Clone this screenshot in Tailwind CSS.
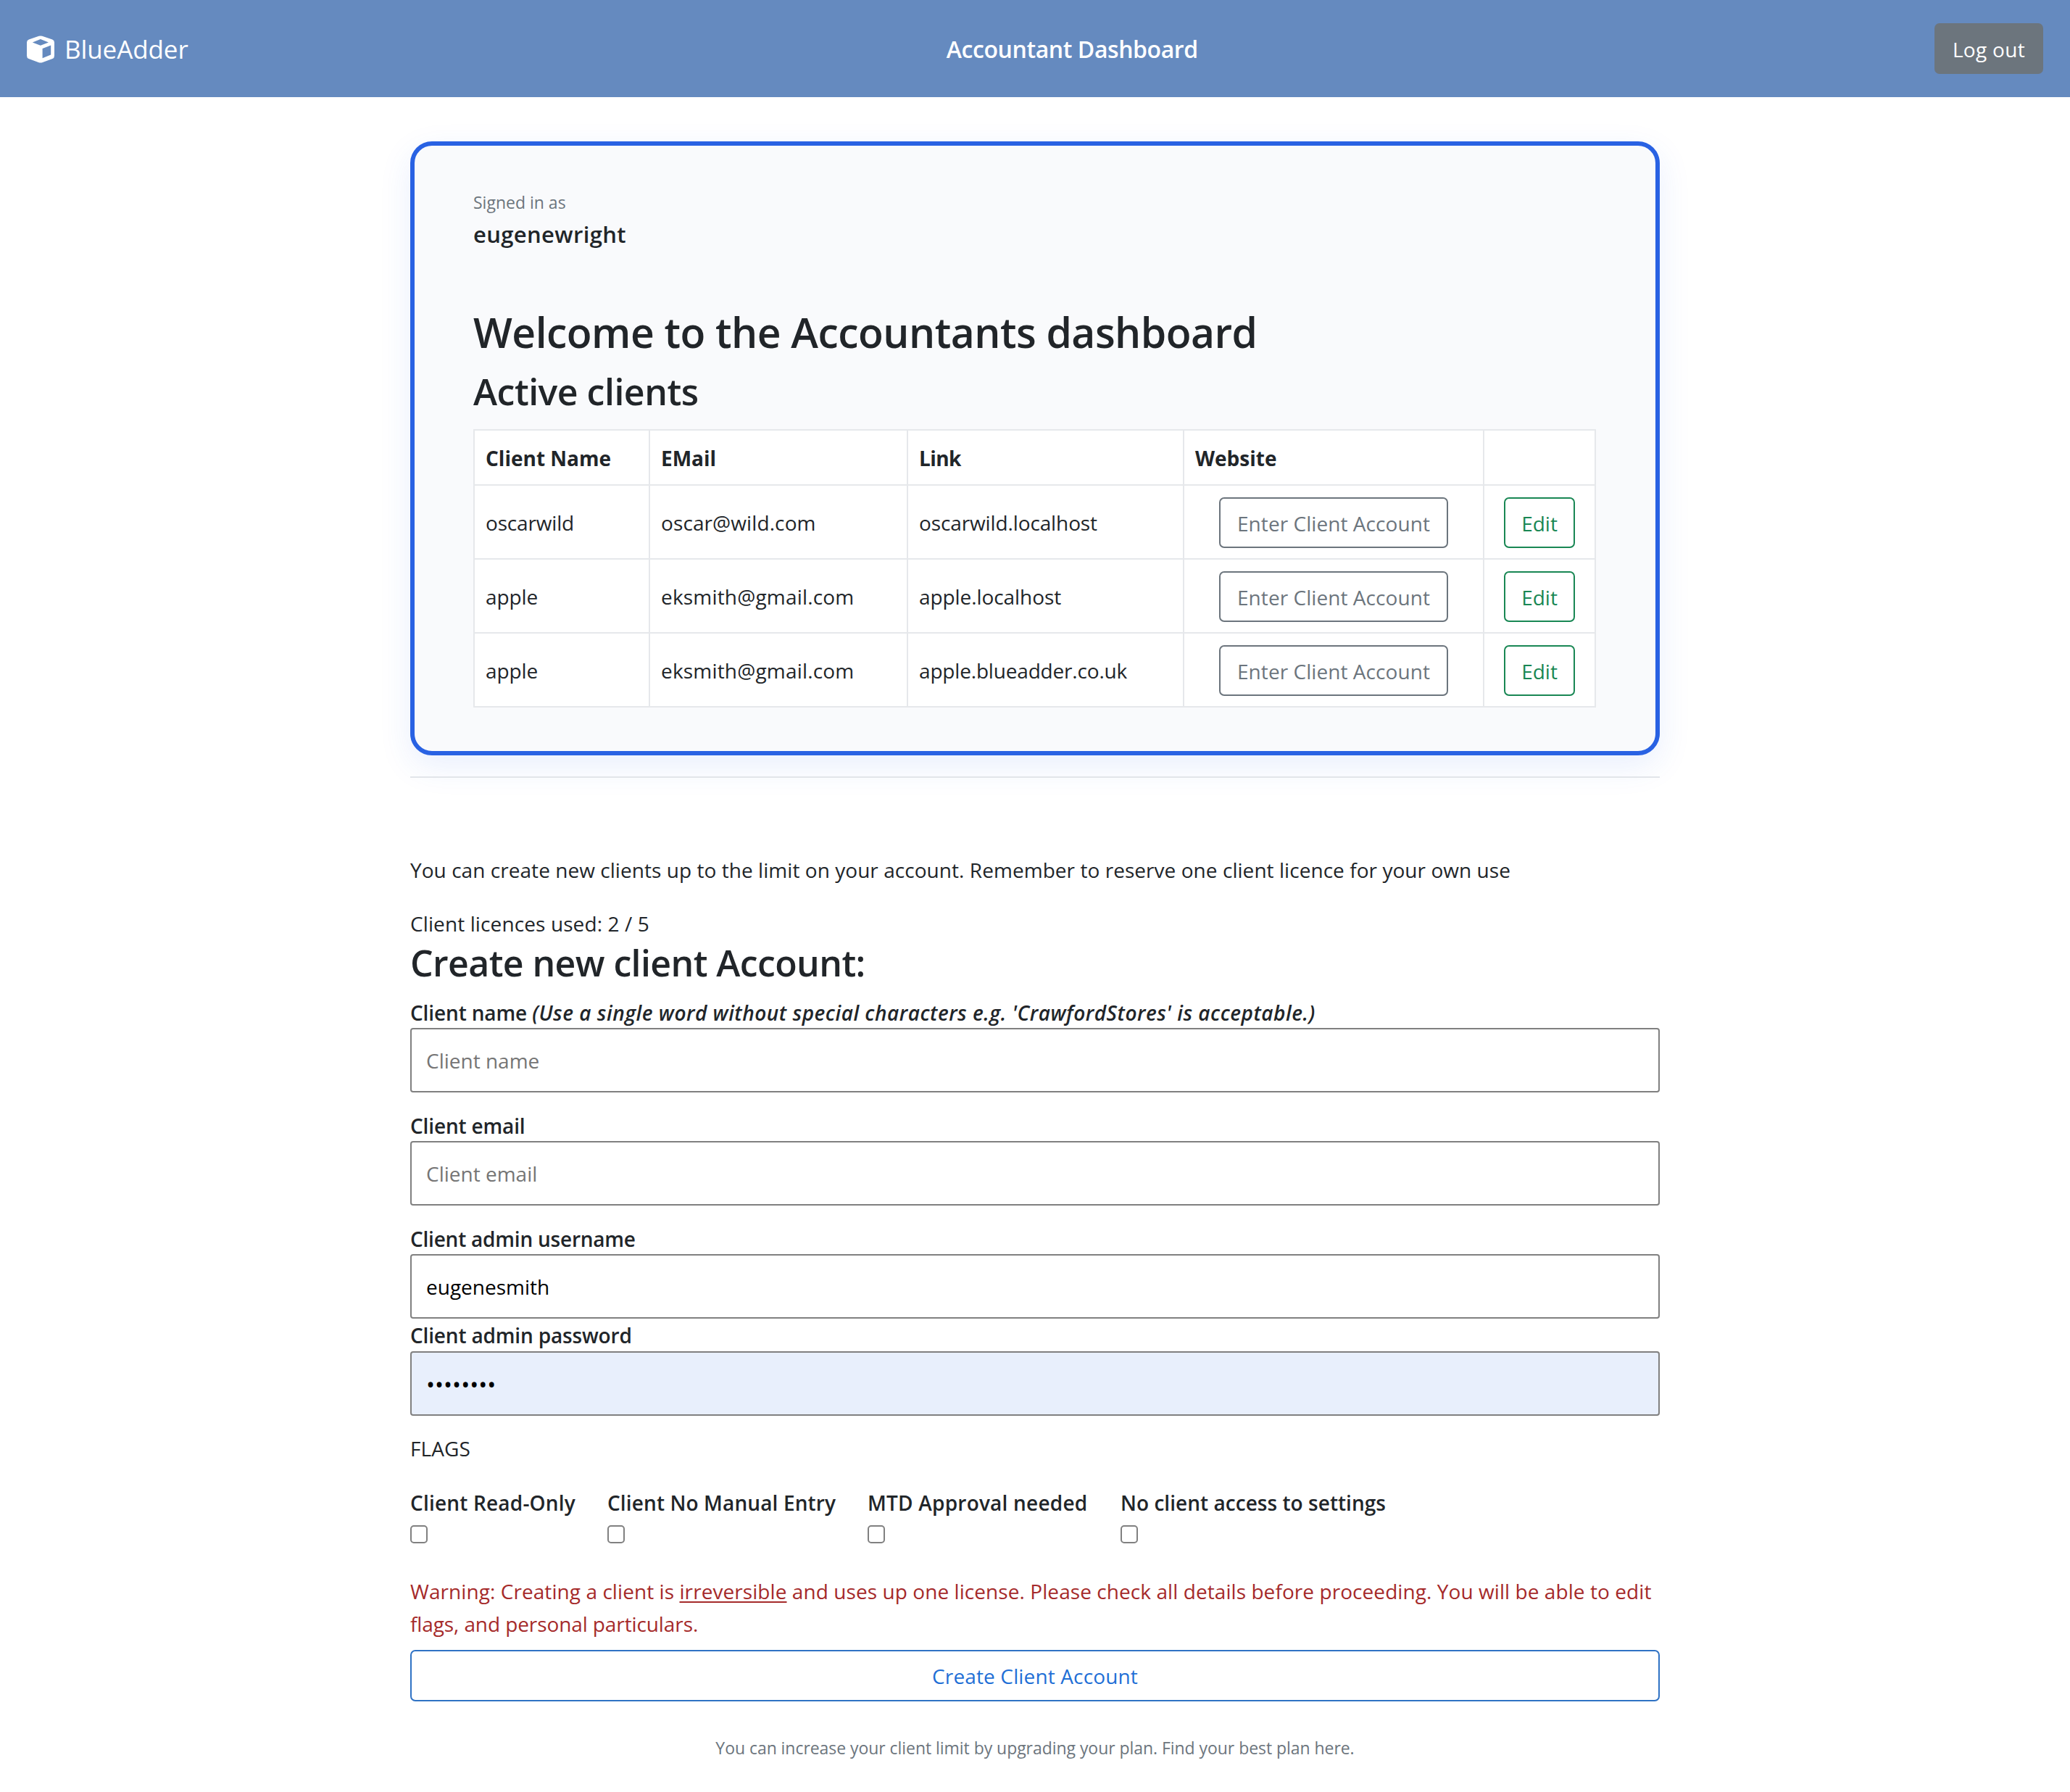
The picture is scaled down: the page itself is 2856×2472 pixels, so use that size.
<!DOCTYPE html>
<html lang="en">
<head>
  <meta charset="UTF-8">
  <meta name="viewport" content="width=device-width, initial-scale=1.0">
  <title>Accountant Dashboard</title>
  <script src="https://cdn.jsdelivr.net/npm/@tailwindcss/browser@4"></script>
  <style>
    body {
      font-family: 'Open Sans', sans-serif;
    }
  </style>
</head>
<body class="bg-white text-[#212529] text-[28px] leading-[44px]">

  <header class="bg-[#658abf] text-white h-[134px] flex justify-between items-center px-[37px]">
    <a href="#" class="mr-[30px] flex items-center gap-[14px] text-[35px] tracking-[-0.1px] pt-px">
      <svg class="w-[38px] h-[38px]" viewBox="0 0 38 38" fill="currentColor">
        <path fill-rule="evenodd" d="M16.6 .8Q18.9 0 21.2 .8L35.2 5.6Q38 6.7 38 9.6V28Q38 31 35.4 32L21.2 37.2Q18.9 38 16.6 37.2L2.6 32Q0 31 0 28V9.6Q0 6.7 2.8 5.6ZM18.9 4.9L7.8 9.4L18.9 13.7L30 9.4ZM33.2 13.4L21.6 17.9V31.2L33.2 26.6Z"/>
      </svg>
      <span>BlueAdder</span>
    </a>
    <h1 class="pt-px text-[32px] font-semibold tracking-[-0.42px]">Accountant Dashboard</h1>
    <button class="w-[150px] h-[70px] pt-0.5 rounded-[7px] bg-[#6c757d] tracking-[0.3px]">Log out</button>
  </header>

  <main class="w-[1724px] mx-auto pt-[61px]">

    <section class="border-[6px] border-[#2962e3] rounded-[30px] bg-[#f9fafc] px-[81px] pt-[60px] pb-[60px] shadow-[0_15px_45px_rgba(37,99,235,0.1)]">
      <p class="text-[23px] leading-[37px] h-[36px] text-[#6c757d]">Signed in as</p>
      <p class="mt-[3px] text-[31px] leading-[46px] font-semibold tracking-[0.36px]">eugenewright</p>

      <h2 class="mt-[77px] text-[57px] leading-[70px] font-semibold tracking-[-0.53px]">Welcome to the Accountants dashboard</h2>
      <h3 class="mt-[16px] text-[50px] leading-[62px] font-semibold tracking-[-0.5px]">Active clients</h3>

      <table class="mt-[21px] w-[1549px] table-fixed border-collapse bg-white text-left [&_th]:border-2 [&_td]:border-2 [&_th]:border-[#e6e8eb] [&_td]:border-[#e6e8eb] [&_th]:px-[15px] [&_td]:px-[15px] [&_td]:pt-px [&_td]:pb-0 [&_td]:leading-none">
        <colgroup>
          <col class="w-[242px]">
          <col class="w-[356px]">
          <col class="w-[381px]">
          <col class="w-[414px]">
          <col class="w-[154px]">
        </colgroup>
        <thead>
          <tr class="h-[76px]">
            <th class="pt-0.5">Client Name</th>
            <th class="pt-0.5">EMail</th>
            <th class="pt-0.5 tracking-[-0.6px]">Link</th>
            <th class="pt-0.5">Website</th>
            <th></th>
          </tr>
        </thead>
        <tbody>
          <tr class="h-[102px]">
            <td><span class="tracking-[-0.17px]">oscarwild</span></td>
            <td><span class="tracking-[0.1px]">oscar@wild.com</span></td>
            <td><span class="tracking-[-0.12px]">oscarwild.localhost</span></td>
            <td><button class="block mx-auto w-[316px] h-[70px] pt-0.5 border-2 border-[#6c757d] rounded-[7px] text-[#6c757d] tracking-[0.06px]">Enter Client Account</button></td>
            <td><button class="block mx-auto w-[98px] h-[70px] pt-0.5 border-2 border-[#198754] rounded-[7px] text-[#198754]">Edit</button></td>
          </tr>
          <tr class="h-[102px]">
            <td><span class="tracking-[-0.12px]">apple</span></td>
            <td><span class="tracking-[0.18px]">eksmith@gmail.com</span></td>
            <td><span class="tracking-[-0.08px]">apple.localhost</span></td>
            <td><button class="block mx-auto w-[316px] h-[70px] pt-0.5 border-2 border-[#6c757d] rounded-[7px] text-[#6c757d] tracking-[0.06px]">Enter Client Account</button></td>
            <td><button class="block mx-auto w-[98px] h-[70px] pt-0.5 border-2 border-[#198754] rounded-[7px] text-[#198754]">Edit</button></td>
          </tr>
          <tr class="h-[102px]">
            <td><span class="tracking-[-0.12px]">apple</span></td>
            <td><span class="tracking-[0.18px]">eksmith@gmail.com</span></td>
            <td><span class="tracking-[-0.18px]">apple.blueadder.co.uk</span></td>
            <td><button class="block mx-auto w-[316px] h-[70px] pt-0.5 border-2 border-[#6c757d] rounded-[7px] text-[#6c757d] tracking-[0.06px]">Enter Client Account</button></td>
            <td><button class="block mx-auto w-[98px] h-[70px] pt-0.5 border-2 border-[#198754] rounded-[7px] text-[#198754]">Edit</button></td>
          </tr>
        </tbody>
      </table>
    </section>

    <hr class="mt-[29px] border-t-2 border-[#e2e5ea]">

    <p class="mt-[105px] tracking-[0.05px]">You can create new clients up to the limit on your account. Remember to reserve one client licence for your own use</p>
    <p class="mt-[30px] tracking-[0.11px]">Client licences used: 2 / 5</p>

    <form>
      <h3 class="mt-px text-[50px] leading-[63px] h-[62px] font-semibold tracking-[-0.6px]">Create new client Account:</h3>

      <label for="name" class="block mt-[15px] h-[44px] leading-[46px] font-semibold whitespace-nowrap tracking-[-0.13px]">Client name <em class="tracking-[0.5px]">(Use a single word without special characters e.g. 'CrawfordStores' is acceptable.)</em></label>
      <input type="text" id="name" placeholder="Client name" class="block w-full h-[89px] px-[20px] pt-px border-2 border-[#808080] rounded-[4px] text-black placeholder:text-[#757575]">

      <label for="email" class="block mt-[23px] h-[44px] leading-[46px] font-semibold tracking-[-0.15px]">Client email</label>
      <input type="text" id="email" placeholder="Client email" class="block w-full h-[89px] px-[20px] pt-px border-2 border-[#808080] rounded-[4px] text-black placeholder:text-[#757575]">

      <label for="username" class="block mt-[23px] h-[44px] leading-[46px] font-semibold tracking-[-0.22px]">Client admin username</label>
      <input type="text" id="username" value="eugenesmith" class="block w-full h-[89px] px-[20px] pt-px border-2 border-[#808080] rounded-[4px] text-black">

      <label for="password" class="block h-[45px] leading-[47px] font-semibold tracking-[-0.17px]">Client admin password</label>
      <input type="password" id="password" value="password" class="block w-full h-[89px] px-[20px] pt-0.5 border-2 border-[#808080] rounded-[4px] bg-[#e8effc] text-black text-[32px]">

      <p class="mt-[23px] tracking-[0.1px]">FLAGS</p>

      <div class="mt-[31px] flex font-semibold whitespace-nowrap">
        <div class="w-[272px]">
          <label for="readonly" class="block tracking-[0.19px]">Client Read-Only</label>
          <input type="checkbox" id="readonly" class="block mt-[9px] w-[24px] h-[25px] appearance-none border-2 border-[#808080] rounded-[5px] bg-white">
        </div>
        <div class="w-[359px]">
          <label for="manual" class="block tracking-[0.12px]">Client No Manual Entry</label>
          <input type="checkbox" id="manual" class="block mt-[9px] w-[24px] h-[25px] appearance-none border-2 border-[#808080] rounded-[5px] bg-white">
        </div>
        <div class="w-[349px]">
          <label for="mtd" class="block tracking-[0.22px]">MTD Approval needed</label>
          <input type="checkbox" id="mtd" class="block mt-[9px] w-[24px] h-[25px] appearance-none border-2 border-[#808080] rounded-[5px] bg-white">
        </div>
        <div>
          <label for="settings" class="block tracking-[0.04px]">No client access to settings</label>
          <input type="checkbox" id="settings" class="block mt-[9px] w-[24px] h-[25px] appearance-none border-2 border-[#808080] rounded-[5px] bg-white">
        </div>
      </div>

      <p class="mt-[44px] leading-[45px] text-[#a52a2a] tracking-[0.07px]">Warning: Creating a client is <u class="underline-offset-[3px]">irreversible</u> and uses up one license. Please check all details before proceeding. You will be able to edit<br><span class="tracking-[-0.1px]">flags, and personal particulars.</span></p>

      <button type="button" class="block mt-[13px] w-full h-[71px] pt-px border-2 border-[#2f72c4] rounded-[7px] text-[#1f6fd6] tracking-[0.14px]">Create Client Account</button>
    </form>

    <p class="mt-[46px] text-center text-[23px] leading-[36px] text-[#6c757d] tracking-[-0.05px]">You can increase your client limit by upgrading your plan. Find your best plan here.</p>
  </main>

</body>
</html>
